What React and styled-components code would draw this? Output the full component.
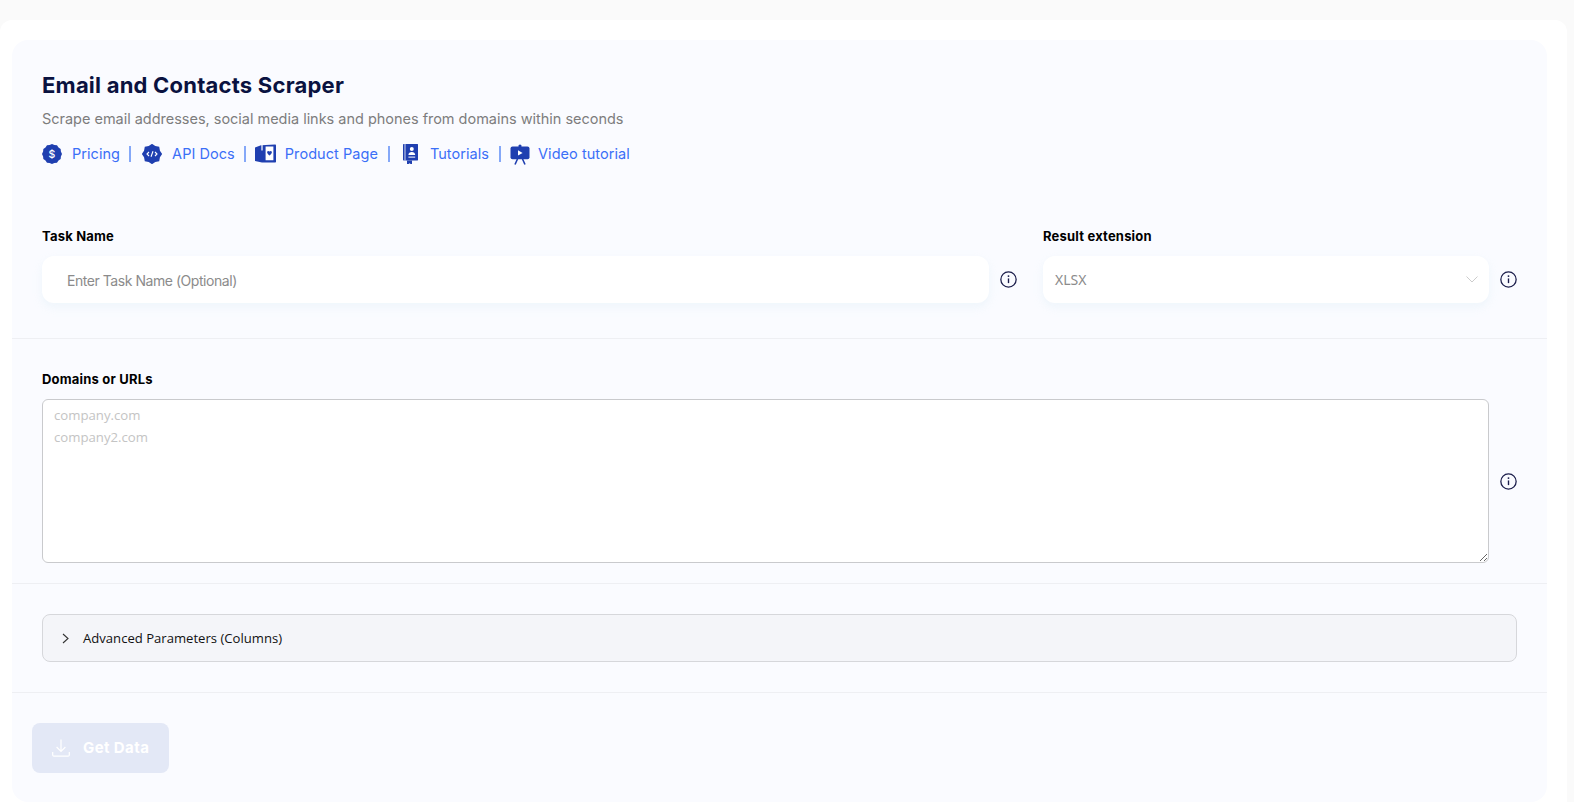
import React from "react";
import styled, { createGlobalStyle } from "styled-components";

const Global = createGlobalStyle`
  html, body { margin: 0; padding: 0; background: #fafafa; height: 802px; overflow: hidden; }
  * { box-sizing: border-box; }
  body { font-family: "Inter", "Liberation Sans", sans-serif; }
`;

const Page = styled.div`
  padding-top: 20px;
  width: 1574px;
  height: 802px;
  overflow: hidden;
`;
const Sheet = styled.main`
  width: 1567px;
  height: 782px;
  background: #fff;
  border-radius: 12px 12px 0 0;
  padding: 20px 20px 0 12px;
`;
const Panel = styled.section`
  height: 762px;
  background: #fafbff;
  border-radius: 16px;
`;
const Header = styled.header`
  padding: 30px 30px 0;
  height: 162px;
`;
const Title = styled.h1`
  margin: 0;
  font: 700 22px/30px "Inter", sans-serif;
  letter-spacing: 0.22px;
  color: #0a1240;
`;
const Subtitle = styled.p`
  margin: 9px 0 0;
  font: 400 14.5px/20px "Inter", sans-serif;
  letter-spacing: -0.02px;
  color: #7d7d7d;
`;
const Links = styled.nav`
  display: flex;
  align-items: center;
  height: 24px;
  margin-top: 13px;
`;
const LinkItem = styled.a`
  display: flex;
  align-items: center;
  gap: ${(p) => p.$gap}px;
  font: 400 14.5px/24px "Inter", sans-serif;
  letter-spacing: 0.05px;
  color: #3b6ff7;
  text-decoration: none;
`;
const Sep = styled.span`
  width: 2px;
  height: 16px;
  margin: 0 ${(p) => p.$right}px 0 ${(p) => p.$left}px;
  background: #85a8f8;
`;
const Section = styled.div`
  padding: ${(p) => p.$pad};
  border-bottom: ${(p) => (p.$last ? "none" : "1px solid #eeeff3")};
`;
const TopRow = styled.div`
  display: grid;
  grid-template-columns: 975px 474px;
  column-gap: 26px;
`;
const Label = styled.label`
  display: block;
  font: 700 13px/18px "Inter", sans-serif;
  letter-spacing: 0.2px;
  color: #000;
  margin-bottom: 11px;
`;
const Control = styled.div`
  display: flex;
  align-items: center;
  gap: 11px;
`;
const TextInput = styled.input`
  flex: 1;
  min-width: 0;
  height: 47px;
  border: none;
  outline: none;
  border-radius: 12px;
  background: #fff;
  padding: 2px 25px 0;
  font: 400 14px/20px "Inter", sans-serif;
  letter-spacing: -0.45px;
  box-shadow: 0 4px 10px rgba(210, 235, 240, 0.28);
  &::placeholder { color: #8b8b8b; opacity: 1; }
`;
const Select = styled.div`
  flex: 1;
  min-width: 0;
  height: 47px;
  border-radius: 12px;
  background: #fff;
  padding: 0 11px 0 12px;
  display: flex;
  align-items: center;
  justify-content: space-between;
  font: 400 14px/20px "Noto Sans", sans-serif;
  color: #8b8b8b;
  box-shadow: 0 4px 10px rgba(210, 235, 240, 0.28);
`;
const Area = styled.textarea`
  display: block;
  flex: 1;
  min-width: 0;
  height: 164px;
  border: 1px solid #c9cacd;
  border-radius: 6px;
  background: #fff;
  outline: none;
  padding: 4px 11px;
  font: 400 13.2px/22px "Open Sans", sans-serif;
  resize: vertical;
  &::placeholder { color: #c4c4c4; opacity: 1; }
`;
const Accordion = styled.button`
  display: flex;
  align-items: center;
  gap: 14px;
  width: 100%;
  height: 48px;
  padding: 0 0 0 19px;
  background: #f4f5f9;
  border: 1px solid #d6d7db;
  border-radius: 8px;
  font: 400 13.1px/20px "Open Sans", sans-serif;
  color: #111;
  text-align: left;
`;
const GetData = styled.button`
  display: flex;
  align-items: center;
  gap: 13px;
  width: 137px;
  height: 50px;
  padding: 0 0 0 20px;
  border: none;
  border-radius: 8px;
  background: #e3e8f6;
  color: #fff;
  font: 700 15px/20px "Inter", sans-serif;
  letter-spacing: 0.4px;
`;

const blue = "#1f3fb0";

const Info = () => (
  <svg width="17" height="17" viewBox="0 0 16 16" fill="none" style={{ flex: "none" }}>
    <circle cx="8" cy="8" r="7.2" stroke="#1a1c4a" strokeWidth="1.2" />
    <path d="M8 7v4.4" stroke="#1a1c4a" strokeWidth="1.3" />
    <circle cx="8" cy="4.8" r="0.9" fill="#1a1c4a" />
  </svg>
);

const gearPath = (teeth, r1, r2) => {
  let d = "";
  const n = teeth * 2;
  for (let i = 0; i < n; i++) {
    const a = (i / n) * Math.PI * 2;
    const r = i % 2 ? r1 : r2;
    d += `${i ? "L" : "M"}${(10 + r * Math.cos(a)).toFixed(2)} ${(10 + r * Math.sin(a)).toFixed(2)}`;
  }
  return d + "Z";
};

const Dollar = () => (
  <svg width="20" height="20" viewBox="0 0 20 20">
    <path d={gearPath(12, 9.2, 10)} fill={blue} />
    <text x="10" y="13.8" textAnchor="middle" fontSize="10.5" fontWeight="500" fill="#fff" fontFamily="Inter, sans-serif">$</text>
  </svg>
);
const Code = () => (
  <svg width="20" height="20" viewBox="0 0 20 20">
    <path d={gearPath(8, 8.6, 10.2)} fill={blue} />
    <path d="M7 8 5 10l2 2M13 8l2 2-2 2M11 7.2l-2 5.6" stroke="#fff" strokeWidth="1.1" fill="none" />
  </svg>
);
const BookCard = () => (
  <svg width="21" height="20" viewBox="0 0 21 20">
    <path d="M0 3.6 6 1.2 20 .6c.6 0 1 .4 1 1v15.8c0 .6-.4 1-1 1H7L0 17z" fill={blue} />
    <path d="M6.4 0.5h1.2v6h-1.2z" fill="#fff" />
    <path d="M10.6 2.4h7.8v13.8h-7.8z" fill="#fff" />
    <path d="M14.5 7.6c-1-1.3-2.9-.4-2.3 1.2.3 1 1.4 2 2.3 2.8.9-.8 2-1.8 2.3-2.8.6-1.6-1.3-2.5-2.3-1.2z" fill={blue} />
  </svg>
);
const Tutorial = () => (
  <svg width="16" height="20" viewBox="0 0 16 20">
    <path d="M1 0h13.5c.4 0 .5.2.5.5V16c0 .3-.2.5-.5.5H1c-.6 0-1-.4-1-1V1c0-.6.4-1 1-1z" fill={blue} />
    <rect x="1.6" y="0" width="0.8" height="16.5" fill="#fff" />
    <circle cx="8.8" cy="5" r="2" fill="#fff" />
    <path d="M5.4 11c0-2 1.5-3 3.4-3s3.4 1 3.4 3z" fill="#fff" />
    <rect x="5.4" y="12.6" width="6.8" height="1" fill="#fff" />
    <path d="M4 16.5h5V20H7.6l-1-.8-1 .8H4z" fill={blue} />
  </svg>
);
const Video = () => (
  <svg width="20" height="21" viewBox="0 0 20 21">
    <rect x="0.5" y="2.6" width="19" height="12.6" rx="2" fill={blue} />
    <circle cx="10" cy="2" r="1.6" fill={blue} />
    <path d="M8 6.2v5.4l4.6-2.7z" fill="#fff" />
    <path d="M7.5 15 5 20.5M12.5 15l2.5 5.5" stroke={blue} strokeWidth="1.6" fill="none" />
  </svg>
);
const Chevron = ({ d, w, h, c, sw }) => (
  <svg width={w} height={h} viewBox={`0 0 ${w} ${h}`} fill="none" style={{ flex: "none" }}>
    <path d={d} stroke={c} strokeWidth={sw} />
  </svg>
);
const Download = () => (
  <svg width="18" height="18" viewBox="0 0 18 18" fill="none" stroke="#fff" strokeWidth="1.2" style={{ flex: "none" }}>
    <path d="M9 .5v12M4.6 8 9 12.4 13.4 8M.7 13v3c0 .7.5 1.2 1.2 1.2h14.2c.7 0 1.2-.5 1.2-1.2v-3" />
  </svg>
);

export default function App() {
  return (
    <Page>
      <Global />
      <Sheet>
        <Panel>
          <Header>
            <Title>Email and Contacts Scraper</Title>
            <Subtitle>Scrape email addresses, social media links and phones from domains within seconds</Subtitle>
            <Links>
              <LinkItem href="#" $gap={10}><Dollar />Pricing</LinkItem>
              <Sep $left={9} $right={11} />
              <LinkItem href="#" $gap={10}><Code />API Docs</LinkItem>
              <Sep $left={9} $right={9} />
              <LinkItem href="#" $gap={9}><BookCard />Product Page</LinkItem>
              <Sep $left={10} $right={13} />
              <LinkItem href="#" $gap={11}><Tutorial />Tutorials</LinkItem>
              <Sep $left={10} $right={9} />
              <LinkItem href="#" $gap={8}><Video />Video tutorial</LinkItem>
            </Links>
          </Header>
          <Section $pad="25px 30px 35px">
            <TopRow>
              <div>
                <Label>Task Name</Label>
                <Control>
                  <TextInput placeholder="Enter Task Name (Optional)" />
                  <Info />
                </Control>
              </div>
              <div>
                <Label>Result extension</Label>
                <Control>
                  <Select>
                    XLSX
                    <Chevron d="M.5.5 6 6l5.5-5.5" w={12} h={7} c="#c6c6c6" sw={0.9} />
                  </Select>
                  <Info />
                </Control>
              </div>
            </TopRow>
          </Section>
          <Section $pad="31px 30px 20px">
            <Label>Domains or URLs</Label>
            <Control>
              <Area placeholder={"company.com\ncompany2.com"} />
              <Info />
            </Control>
          </Section>
          <Section $pad="30px 30px 30px">
            <Accordion>
              <Chevron d="M1 1l5 4.5L1 10" w={7} h={11} c="#333" sw={1.1} />
              Advanced Parameters (Columns)
            </Accordion>
          </Section>
          <Section $pad="30px 20px 0" $last>
            <GetData><Download />Get Data</GetData>
          </Section>
        </Panel>
      </Sheet>
    </Page>
  );
}
